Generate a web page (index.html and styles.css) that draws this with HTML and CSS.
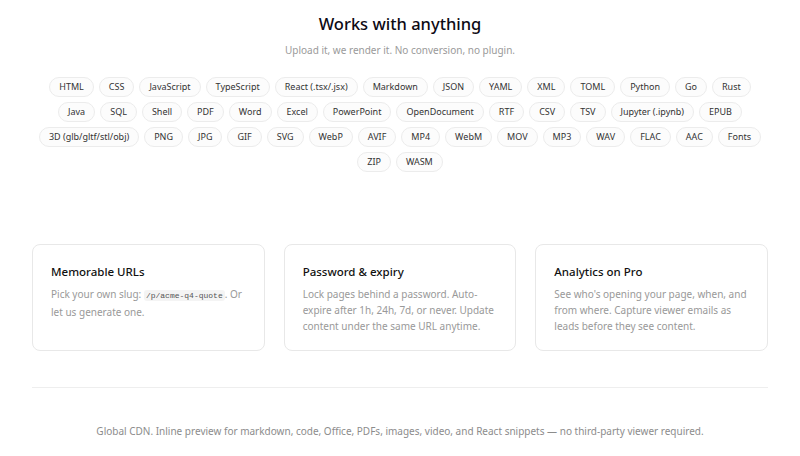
FILE: index.html
```html
<!DOCTYPE html>
<html>
<head>
<meta charset="utf-8">
<link rel="stylesheet" href="styles.css">
</head>
<body>
<main class="page">
  <section class="formats">
    <h1 class="title">Works with anything</h1>
    <p class="subtitle">Upload it, we render it. No conversion, no plugin.</p>
    <ul class="chips">
      <li class="chip">HTML</li>
      <li class="chip">CSS</li>
      <li class="chip">JavaScript</li>
      <li class="chip">TypeScript</li>
      <li class="chip">React (.tsx/.jsx)</li>
      <li class="chip">Markdown</li>
      <li class="chip">JSON</li>
      <li class="chip">YAML</li>
      <li class="chip">XML</li>
      <li class="chip">TOML</li>
      <li class="chip">Python</li>
      <li class="chip">Go</li>
      <li class="chip">Rust</li>
      <li class="chip">Java</li>
      <li class="chip">SQL</li>
      <li class="chip">Shell</li>
      <li class="chip">PDF</li>
      <li class="chip">Word</li>
      <li class="chip">Excel</li>
      <li class="chip">PowerPoint</li>
      <li class="chip">OpenDocument</li>
      <li class="chip">RTF</li>
      <li class="chip">CSV</li>
      <li class="chip">TSV</li>
      <li class="chip">Jupyter (.ipynb)</li>
      <li class="chip">EPUB</li>
      <li class="chip">3D (glb/gltf/stl/obj)</li>
      <li class="chip">PNG</li>
      <li class="chip">JPG</li>
      <li class="chip">GIF</li>
      <li class="chip">SVG</li>
      <li class="chip">WebP</li>
      <li class="chip">AVIF</li>
      <li class="chip">MP4</li>
      <li class="chip">WebM</li>
      <li class="chip">MOV</li>
      <li class="chip">MP3</li>
      <li class="chip">WAV</li>
      <li class="chip">FLAC</li>
      <li class="chip">AAC</li>
      <li class="chip">Fonts</li>
      <li class="chip">ZIP</li>
      <li class="chip">WASM</li>
    </ul>
  </section>

  <section class="cards">
    <article class="card">
      <h2 class="card-title">Memorable URLs</h2>
      <p class="card-text">Pick your own slug: <code class="slug">/p/acme-q4-quote</code>. Or let us generate one.</p>
    </article>
    <article class="card">
      <h2 class="card-title">Password &amp; expiry</h2>
      <p class="card-text">Lock pages behind a password. Auto-expire after 1h, 24h, 7d, or never. Update content under the same URL anytime.</p>
    </article>
    <article class="card">
      <h2 class="card-title">Analytics on Pro</h2>
      <p class="card-text">See who's opening your page, when, and from where. Capture viewer emails as leads before they see content.</p>
    </article>
  </section>

  <footer class="footer">
    <p class="footer-text">Global CDN. Inline preview for markdown, code, Office, PDFs, images, video, and React snippets — no third-party viewer required.</p>
  </footer>
</main>
</body>
</html>
```

FILE: styles.css
```css
* { box-sizing: border-box; }

html, body {
  margin: 0;
  padding: 0;
  background: #ffffff;
}

body {
  font-family: "Noto Sans", "Open Sans", sans-serif;
  color: #111111;
}

.page {
  width: 800px;
  padding: 0 32px;
}

.formats {
  text-align: center;
  padding-top: 10px;
}

.title {
  margin: 0;
  font-size: 16.5px;
  line-height: 28px;
  font-weight: 500;
  color: #0d0a14;
}

.subtitle {
  margin: 5px 0 0;
  font-size: 10px;
  line-height: 14px;
  color: #9a9a9a;
}

.chips {
  list-style: none;
  margin: 20px 0 0;
  padding: 0;
  display: flex;
  flex-wrap: wrap;
  justify-content: center;
  gap: 5px 5px;
}

.chip {
  height: 20px;
  line-height: 18px;
  padding: 0 9px;
  font-size: 9px;
  color: #333333;
  background: #fcfcfc;
  border: 1px solid #ececec;
  border-radius: 999px;
  white-space: nowrap;
}

.cards {
  display: grid;
  grid-template-columns: repeat(3, 1fr);
  gap: 19px;
  margin-top: 72px;
}

.card {
  height: 107px;
  border: 1px solid #e8e8e8;
  border-radius: 8px;
  padding: 17px 18px 0;
  background: #ffffff;
}

.card-title {
  margin: 0;
  font-size: 11.5px;
  line-height: 20px;
  font-weight: 500;
  color: #111111;
}

.card-text {
  margin: 4px 0 0;
  font-size: 10px;
  line-height: 16px;
  color: #999999;
}

.slug {
  font-family: "Liberation Mono", "DejaVu Sans Mono", monospace;
  font-size: 8px;
  color: #555555;
  background: #f4f4f4;
  border-radius: 3px;
  padding: 1px 2px;
}

.footer {
  margin-top: 36px;
  border-top: 1px solid #eeeeee;
  text-align: center;
  padding-top: 36px;
}

.footer-text {
  margin: 0;
  font-size: 10px;
  line-height: 14px;
  color: #8c8c8c;
}
```
